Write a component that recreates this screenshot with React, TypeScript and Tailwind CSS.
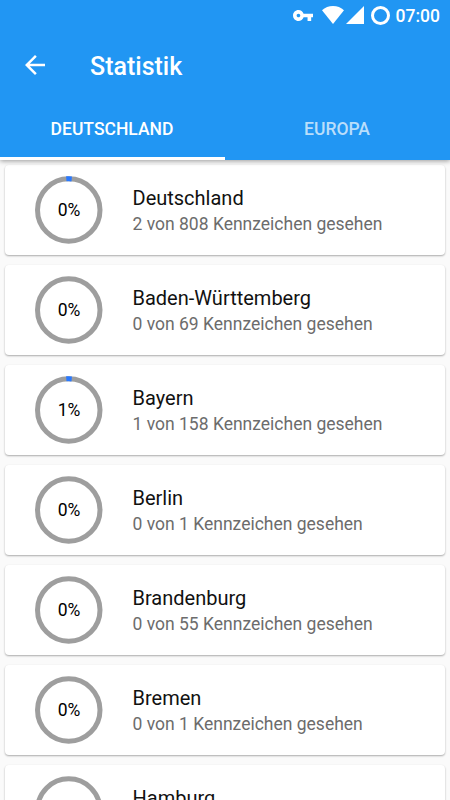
import { useState } from "react";

type Region = {
	name: string;
	seen: number;
	total: number;
};

const TABS = ["Deutschland", "Europa"];

const REGIONS: Region[] = [
	{ name: "Deutschland", seen: 2, total: 808 },
	{ name: "Baden-Württemberg", seen: 0, total: 69 },
	{ name: "Bayern", seen: 1, total: 158 },
	{ name: "Berlin", seen: 0, total: 1 },
	{ name: "Brandenburg", seen: 0, total: 55 },
	{ name: "Bremen", seen: 0, total: 1 },
	{ name: "Hamburg", seen: 0, total: 1 },
];

const StatusBar = () => (
	<div className="flex h-[30px] items-center justify-end pr-[10px] text-white">
		<svg className="mr-[9px]" width="20" height="11" viewBox="1 6 22 12" preserveAspectRatio="none" fill="currentColor">
			<path d="M12.65 10C11.83 7.67 9.61 6 7 6c-3.31 0-6 2.69-6 6s2.69 6 6 6c2.61 0 4.83-1.67 5.65-4H17v4h4v-4h2v-4H12.65zM7 14c-1.1 0-2-.9-2-2s.9-2 2-2 2 .9 2 2-.9 2-2 2z" />
		</svg>
		<svg className="mr-[2px]" width="22" height="18" viewBox="0 0 22 18" fill="currentColor">
			<path d="M11 18 22 4.2C19 1.6 15.2 0 11 0S3 1.6 0 4.2z" />
		</svg>
		<svg className="mr-[7px]" width="18" height="18" viewBox="0 0 18 18" fill="currentColor">
			<path d="M0 18h18V0z" />
		</svg>
		<svg className="mr-[6px]" width="19" height="19" viewBox="0 0 19 19" fill="none" stroke="currentColor">
			<circle cx="9.5" cy="9.5" r="8" strokeWidth="3" />
		</svg>
		<span className="pt-[2px] text-[17.5px] leading-[30px] font-medium">07:00</span>
	</div>
);

const Toolbar = () => (
	<div className="flex h-[70px] items-center pl-5 text-white">
		<button className="block" aria-label="Zurück">
			<svg width="30" height="30" viewBox="0 0 24 24" fill="currentColor">
				<path d="M20 11H7.83l5.59-5.59L12 4l-8 8 8 8 1.41-1.41L7.83 13H20v-2z" />
			</svg>
		</button>
		<h1 className="ml-10 pt-[3px] text-[25px] leading-[30px] font-medium">Statistik</h1>
	</div>
);

const ProgressRing = ({ seen, total }: { seen: number; total: number }) => {
	const percent = Math.round((seen / total) * 100);
	const radius = 31.25;
	const length = 2 * Math.PI * radius;

	return (
		<div className="relative flex h-[68px] w-[68px] items-center justify-center">
			<svg className="absolute inset-0" width="68" height="68" viewBox="0 0 68 68" fill="none">
				<circle cx="33.75" cy="34" r={radius} stroke="#9e9e9e" strokeWidth="5" />
				{seen > 0 && (
					<circle
						cx="33.75"
						cy="34"
						r={radius}
						stroke="#2979ff"
						strokeWidth="5"
						strokeDasharray={`5.4 ${length}`}
						transform="rotate(-94.5 33.75 34)"
					/>
				)}
			</svg>
			<span className="text-[17.5px] leading-5 text-black">{percent}%</span>
		</div>
	);
};

const RegionCard = ({ region }: { region: Region }) => (
	<div className="flex h-[90px] shrink-0 items-center rounded-[4px] bg-white pl-[30px] shadow-[0_1px_2px_rgba(0,0,0,0.32)]">
		<ProgressRing seen={region.seen} total={region.total} />
		<div className="ml-[29.5px] pt-[2px]">
			<div className="text-[20px] leading-[26px] text-[#111111]">{region.name}</div>
			<div className="text-[17.5px] leading-[26px] text-[#6c6c6c]">
				{region.seen} von {region.total} Kennzeichen gesehen
			</div>
		</div>
	</div>
);

const App = () => {
	const [active, setActive] = useState(0);

	return (
		<div className="flex h-[800px] w-[450px] flex-col overflow-hidden bg-[#fafafa] font-[Roboto,sans-serif]">
			<header className="relative z-10 h-[160px] shrink-0 bg-[#2196f3] shadow-[0_1px_5px_rgba(0,0,0,0.4)]">
				<StatusBar />
				<Toolbar />
				<div className="flex h-[60px]">
					{TABS.map((tab, i) => (
						<button
							key={tab}
							onClick={() => setActive(i)}
							className={`flex-1 border-b-[3px] pt-[1px] pr-[1px] text-[17.5px] font-medium uppercase ${
								i === active ? "border-white text-white" : "border-transparent text-white/70"
							}`}
						>
							{tab}
						</button>
					))}
				</div>
			</header>
			<main className="flex flex-col gap-[10px] px-[5px] pt-[5px]">
				{REGIONS.map((region) => (
					<RegionCard key={region.name} region={region} />
				))}
			</main>
		</div>
	);
};

export default App;
